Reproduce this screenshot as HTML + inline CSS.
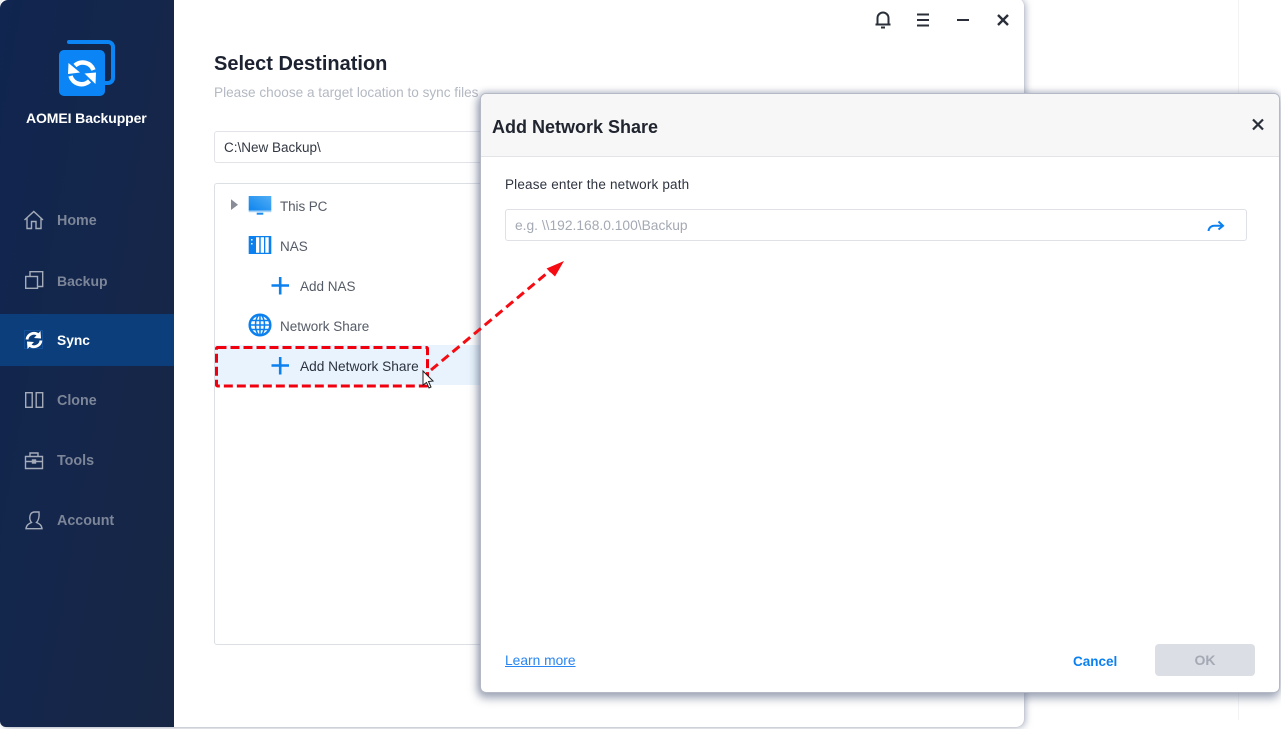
<!DOCTYPE html>
<html>
<head>
<meta charset="utf-8">
<style>
html,body{margin:0;padding:0;width:1281px;height:729px;overflow:hidden;background:#fff}
body{position:relative;font-family:"Liberation Sans",sans-serif}
.a{position:absolute;white-space:nowrap}
#win{position:absolute;left:0;top:-2px;width:1024px;height:729px;background:#fff;border-radius:8px;box-shadow:0 0 1px #a9afbd,2px 1px 7px rgba(120,130,155,.55);overflow:hidden}
#side{position:absolute;left:0;top:0;width:174px;height:727px;background:linear-gradient(100deg,#10254f 0%,#15264a 60%,#162643 100%);border-top-left-radius:8px;border-bottom-left-radius:6px}
.nav{position:absolute;left:57px;font-size:13.8px;font-weight:bold;color:#7d8698;line-height:20px}
.t{position:absolute;font-size:13.5px;color:#555b66;line-height:20px;white-space:nowrap}
svg{position:absolute;overflow:visible}
</style>
</head>
<body>
<div class="a" style="left:1238px;top:0;width:1px;height:720px;background:#f2f3f5"></div>
<div id="win"></div>
<div id="side"></div>
<div class="a" style="left:0;top:314px;width:174px;height:52px;background:#0c3e7c"></div>

<!-- logo -->
<svg style="left:0;top:0" width="174" height="110" viewBox="0 0 174 110">
<path d="M69 42H108a5 5 0 0 1 5 5V78a5 5 0 0 1-5 5h-3" fill="none" stroke="#0b85f5" stroke-width="4" stroke-linecap="round"/>
<rect x="59" y="50" width="46" height="46" rx="5" fill="#0b85f5"/>
<path d="M93.500 70A11.500 11.500 0 0 0 75 65.500" fill="none" stroke="#fff" stroke-width="4.500"/>
<path d="M68.500 63 80 72.500 68 74z" fill="#fff"/>
<path d="M70.500 76A11.500 11.500 0 0 0 89.500 81" fill="none" stroke="#fff" stroke-width="4.500"/>
<path d="M96 72.500 84.500 73.500 95.500 84z" fill="#fff"/>
</svg>
<div class="a" style="left:26px;top:109px;font-size:14px;font-weight:bold;color:#fff;line-height:18px;letter-spacing:-.1px">AOMEI Backupper</div>

<!-- nav icons -->
<svg style="left:0;top:190px" width="60" height="350" viewBox="0 0 60 350" fill="none" stroke="#a5acb9" stroke-width="1.400">
<path d="M24.500 30 33.800 21.500 43 30M27 27.500V38.500H31.500V31.500H36V38.500H41V27.500"/>
<path d="M30 86V81.700H42.700V96.500H38"/>
<rect x="25.700" y="86.500" width="11.800" height="11.800"/>
<rect x="25.700" y="202.700" width="6.500" height="14.600"/><rect x="36.200" y="202.700" width="6.500" height="14.600"/>
<path d="M25.500 266.500H42.500V278.500H25.500ZM25.500 271.500H42.500M30 266.500V263H38V266.500"/><rect x="32.500" y="270" width="3" height="3" fill="#a5acb9"/>
<path d="M26 338.700C26.500 334.500 29.500 333.500 31.500 332.500 28.500 329 29.500 322.500 34 322H39C39.500 327.500 38.500 330.500 36.500 332.500 38.500 333.500 41.500 334.500 42 338.700Z"/>
</svg>
<div class="a" style="left:24px;top:330px;width:19px;height:19px;border:1px solid #14509a;box-sizing:border-box"></div>
<svg style="left:24px;top:330px" width="20" height="20" viewBox="0 0 20 20">
<path d="M3 9.500A7 7 0 0 1 14.500 5" fill="none" stroke="#fff" stroke-width="2.800"/>
<path d="M16.500 1 17 8.500 10 8z" fill="#fff"/>
<path d="M17 10.500A7 7 0 0 1 5.500 15" fill="none" stroke="#fff" stroke-width="2.800"/>
<path d="M3.500 19 3 11.500 10 12z" fill="#fff"/>
</svg>

<div class="nav" style="top:211px;font-size:14.300px">Home</div>
<div class="nav" style="top:271px;font-size:14px">Backup</div>
<div class="nav" style="top:331px;color:#fff">Sync</div>
<div class="nav" style="top:391px;font-size:14.300px">Clone</div>
<div class="nav" style="top:451px;font-size:14.300px">Tools</div>
<div class="nav" style="top:511px;font-size:14.300px">Account</div>

<!-- title bar icons -->
<svg style="left:860px;top:0" width="160" height="40" viewBox="0 0 160 40" fill="none" stroke="#2a2f3a" stroke-width="2">
<path d="M17.500 24.500V18a5.500 5.500 0 0 1 11 0v6.500M15.500 24.500H30.500"/><path d="M21 27.500H25"/>
<path d="M57 14.500H69M57 20H69M57 25.500H69"/>
<path d="M97 20H109"/>
<path d="M138 15 148 25M148 15 138 25" stroke-width="2.400"/>
</svg>

<div class="a" style="left:214px;top:52px;font-size:20px;font-weight:bold;color:#1c2230;line-height:24px">Select Destination</div>
<div class="a" style="left:214px;top:84px;font-size:13.6px;color:#b3b8c2;line-height:18px">Please choose a target location to sync files</div>

<div class="a" style="left:214px;top:131px;width:300px;height:30px;border:1px solid #e1e3e8;border-radius:3px"></div>
<div class="t" style="left:224px;top:138px;color:#333842">C:\New Backup\</div>

<div class="a" style="left:214px;top:183px;width:300px;height:460px;border:1px solid #dcdfe4;border-radius:3px"></div>
<div class="a" style="left:215px;top:345px;width:290px;height:40px;background:#e8f3fd"></div>

<svg style="left:225px;top:195px" width="60" height="150" viewBox="0 0 60 150">
<path d="M6 4.300 13 9.700 6 15z" fill="#888d98"/>
<defs><linearGradient id="g" x1="0" y1="1" x2="1" y2="0"><stop offset="0" stop-color="#0c84ee"/><stop offset="1" stop-color="#52aef5"/></linearGradient></defs>
<rect x="23.700" y="1" width="22.600" height="14.700" fill="url(#g)"/><rect x="23.700" y="15.700" width="22.600" height="1.500" fill="#a8d2f6"/><rect x="31.700" y="17.700" width="6.600" height="2" fill="#1b8bee"/>
<rect x="23.700" y="41" width="22.600" height="18" fill="#0b80ee"/>
<path d="M31 42.300h3.300v15.400H31zM35.700 42.300H39v15.400h-3.300zM40.300 42.300h3.400v15.400h-3.400z" fill="#fff"/>
<path d="M26 44h1.500v1.500H26zM26 48h1.500v1.500H26z" fill="#fff"/>
<circle cx="35" cy="130" r="10.300" fill="none" stroke="#0b80ee" stroke-width="2.500"/>
<g fill="none" stroke="#0b80ee" stroke-width="1.500"><ellipse cx="35" cy="130" rx="4.500" ry="10"/><path d="M35 120V140M25 130H45M26.500 125.500H43.500M26.500 134.500H43.500"/></g>
</svg>
<div class="t" style="left:280px;top:197px;letter-spacing:-.1px">This PC</div>
<div class="t" style="left:280px;top:237px">NAS</div>
<div class="t" style="left:300px;top:277px">Add NAS</div>
<div class="t" style="left:280px;top:317px">Network Share</div>
<div class="t" style="left:300px;top:357px;color:#2c3240;font-size:13.700px">Add Network Share</div>
<svg style="left:270px;top:275px" width="20" height="100" viewBox="0 0 20 100" fill="none" stroke="#0b80ee" stroke-width="2.600">
<path d="M1.500 10.500H19M10.200 2V19.500M1.500 90.500H19M10.200 82V99.500"/>
</svg>

<!-- dialog -->
<div class="a" style="left:480px;top:93px;width:800px;height:600px;background:#fff;border:1px solid #b4b9c5;border-radius:6px;box-sizing:border-box;box-shadow:-3px 3px 9px rgba(110,120,145,.5),0 6px 9px rgba(110,120,145,.35),0 -2px 6px rgba(110,120,145,.3);overflow:hidden">
<div style="height:62px;background:#f7f7f8;border-bottom:1px solid #e3e4e7"></div>
</div>
<div class="a" style="left:492px;top:115px;font-size:18px;font-weight:bold;color:#21252f;line-height:24px">Add Network Share</div>
<svg style="left:1250px;top:116px" width="16" height="16" viewBox="0 0 16 16" fill="none" stroke="#2a2f3a" stroke-width="2.200"><path d="M3 3.500 13 13.500M13 3.500 3 13.500"/></svg>
<div class="a" style="left:505px;top:176px;font-size:13.500px;color:#2f3440;line-height:18px;letter-spacing:.17px">Please enter the network path</div>
<div class="a" style="left:505px;top:209px;width:740px;height:30px;border:1px solid #dfe1e6;border-radius:3px"></div>
<div class="a" style="left:515px;top:217px;font-size:13.800px;color:#a4a9b3;line-height:18px">e.g. \\192.168.0.100\Backup</div>
<svg style="left:1207px;top:219px" width="18" height="14" viewBox="0 0 18 14" fill="none" stroke="#0b80ee" stroke-width="2"><path d="M1.500 12C2 8 5 6.500 8 6.800H15"/><path d="M11.500 2.500 16 6.800 11.500 10.500"/></svg>
<div class="a" style="left:505px;top:652px;font-size:13.800px;color:#2a86f0;line-height:18px;text-decoration:underline">Learn more</div>
<div class="a" style="left:1073px;top:653px;font-size:13.500px;font-weight:bold;color:#0b80f0;line-height:18px">Cancel</div>
<div class="a" style="left:1155px;top:644px;width:100px;height:32px;background:#dbdee4;border-radius:4px;color:#a4a9b4;font-size:14px;font-weight:bold;line-height:33px;text-align:center">OK</div>

<!-- annotations -->
<svg style="left:0;top:0" width="1281" height="729" viewBox="0 0 1281 729">
<rect x="216.500" y="347.500" width="211" height="38.500" rx="1" fill="none" stroke="#f0000f" stroke-width="3" stroke-dasharray="9 4"/>
<path d="M431 370 552 269" fill="none" stroke="#f50b12" stroke-width="3" stroke-dasharray="9 5"/>
<path d="M564 261 546.500 268.500 555 276.500z" fill="#f50b12"/>
<path d="M423 371V385L426.500 382.500 429 388 431 387 428.500 381.500 433 381z" fill="#fff" stroke="#222" stroke-width="1"/>
</svg>
</body>
</html>
